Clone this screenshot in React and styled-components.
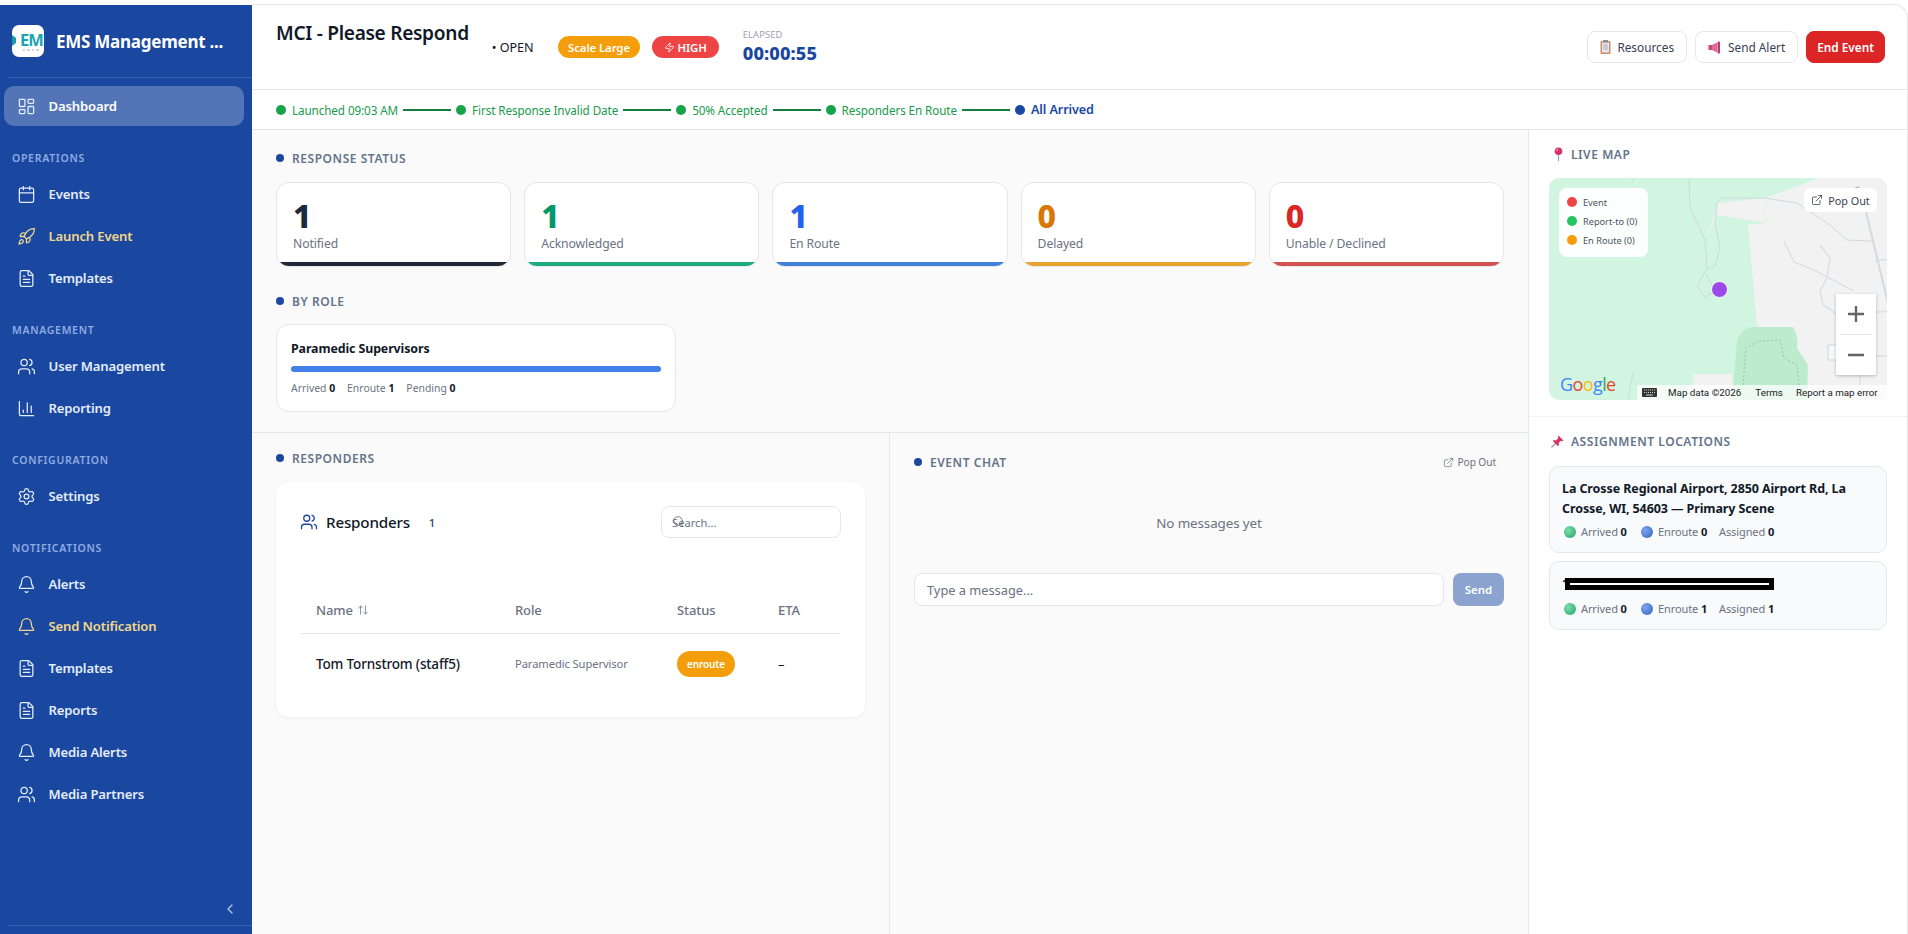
import { Fragment } from 'react';
import styled, { createGlobalStyle } from 'styled-components';
import {
  ArrowUpDown,
  Bell,
  ChartColumn,
  Calendar,
  ChevronLeft,
  ExternalLink,
  FileText,
  LayoutDashboard,
  Rocket,
  Search,
  Settings,
  Users,
  Zap,
} from 'lucide-react';

const GlobalStyle = createGlobalStyle`
  * { box-sizing: border-box; }
  html, body { margin: 0; padding: 0; background: #fff; }
  body {
    font-family: "Noto Sans", "Open Sans", "Liberation Sans", sans-serif;
    color: #111827;
    overflow: hidden;
  }
  input, button { font-family: inherit; }
`;

const Shell = styled.div`
  display: flex;
  height: 934px;
  padding-top: 4px;
  background: #fff;
  overflow: hidden;
`;

const Sidebar = styled.aside`
  width: 252px;
  flex: none;
  display: flex;
  flex-direction: column;
  margin-top: 1px;
  padding-bottom: 8px;
  background: #1a479f;
`;

const Brand = styled.div`
  height: 73px;
  margin-left: 8px;
  padding-left: 4px;
  display: flex;
  align-items: center;
  gap: 12px;
  border-bottom: 1px solid rgba(255, 255, 255, 0.14);
`;

const LogoBox = styled.div`
  position: relative;
  width: 32px;
  height: 32px;
  flex: none;
  border-radius: 7px;
  background: #fff;
  overflow: hidden;
`;

const LogoText = styled.span`
  position: absolute;
  left: 8px;
  top: 4px;
  font-size: 16.5px;
  line-height: 22px;
  font-weight: 700;
  letter-spacing: -0.9px;
  color: #1aa5b5;
  white-space: nowrap;
`;

const LogoMark = styled.svg`
  position: absolute;
  left: 0;
  top: 0;
`;

const BrandName = styled.div`
  font-size: 17px;
  font-weight: 700;
  letter-spacing: -0.25px;
  color: #fff;
  white-space: nowrap;
`;

const Nav = styled.nav`
  padding: 8px 8px 0 4px;
`;

const NavGroupLabel = styled.div`
  height: 14px;
  margin: 25px 0 9px 8px;
  font-size: 10.5px;
  line-height: 14px;
  font-weight: 600;
  letter-spacing: 0.7px;
  color: #8fabe3;
`;

const NavItem = styled.div`
  height: 40px;
  margin-bottom: 2px;
  padding-left: 13px;
  display: flex;
  align-items: center;
  gap: 12.5px;
  border-radius: 10px;
  font-size: 13.1px;
  font-weight: 600;
  letter-spacing: -0.15px;
  white-space: nowrap;
  color: ${(p) => (p.$accent ? '#f0d78c' : p.$active ? '#ffffff' : '#e3ecfb')};
  background: ${(p) => (p.$active ? 'rgba(255, 255, 255, 0.25)' : 'transparent')};
  svg {
    flex: none;
    color: ${(p) => (p.$accent ? '#f0d78c' : '#e3ecfb')};
  }
`;

const SidebarFoot = styled.div`
  margin-top: auto;
  margin-left: 8px;
  padding: 0 14px 8px 0;
  display: flex;
  justify-content: flex-end;
  color: #b9c9ea;
  border-bottom: 1px solid rgba(255, 255, 255, 0.14);
`;

const Main = styled.main`
  flex: 1;
  min-width: 0;
  display: flex;
  flex-direction: column;
  background: #fff;
  border-top: 1px solid #e5e7eb;
  border-right: 1px solid #e5e7eb;
  border-top-right-radius: 14px;
`;

const Header = styled.header`
  height: 85px;
  flex: none;
  padding: 0 22px 0 24px;
  display: flex;
  align-items: center;
  border-bottom: 1px solid #e5e7eb;
`;

const Title = styled.h1`
  margin: 0 23px 28px 0;
  font-size: 19.1px;
  line-height: 27px;
  font-weight: 600;
  letter-spacing: -0.3px;
  color: #111827;
  white-space: nowrap;
`;

const OpenTag = styled.span`
  margin-right: 24px;
  font-size: 12.6px;
  font-weight: 400;
  letter-spacing: -0.05px;
  color: #111827;
  white-space: nowrap;
`;

const Pill = styled.span`
  height: 22px;
  margin-right: 12px;
  padding: 0 ${(p) => p.$pad}px;
  display: inline-flex;
  align-items: center;
  gap: 2px;
  border-radius: 11px;
  font-size: 11.4px;
  font-weight: 600;
  letter-spacing: -0.1px;
  color: #fff;
  white-space: nowrap;
  background: ${(p) => p.$bg};
`;

const Elapsed = styled.div`
  margin-left: 12px;
  display: flex;
  flex-direction: column;
`;

const ElapsedLabel = styled.span`
  font-size: 9.4px;
  line-height: 12px;
  color: #9ca3af;
  letter-spacing: 0.1px;
`;

const ElapsedValue = styled.span`
  font-size: 18.2px;
  line-height: 24px;
  font-weight: 800;
  letter-spacing: 0.1px;
  color: #1a479f;
`;

const HeaderActions = styled.div`
  margin-left: auto;
  display: flex;
  gap: 8px;
`;

const ActionButton = styled.button`
  height: 32px;
  padding: 0 ${(p) => (p.$danger ? '10px' : '12px')};
  display: inline-flex;
  align-items: center;
  justify-content: center;
  gap: 6px;
  border-radius: 8px;
  border: 1px solid ${(p) => (p.$danger ? '#dc2626' : '#e5e7eb')};
  background: ${(p) => (p.$danger ? '#dc2626' : '#fff')};
  color: ${(p) => (p.$danger ? '#fff' : '#374151')};
  font-size: 11.8px;
  font-weight: ${(p) => (p.$danger ? 600 : 400)};
  white-space: nowrap;
`;

const Timeline = styled.div`
  height: 40px;
  flex: none;
  padding-left: 24px;
  display: flex;
  align-items: center;
  gap: 5px;
  border-bottom: 1px solid #e5e7eb;
`;

const StepDot = styled.span`
  width: 10px;
  height: 10px;
  flex: none;
  border-radius: 50%;
  margin-right: 1px;
  background: ${(p) => (p.$current ? '#1a479f' : '#16a34a')};
`;

const StepText = styled.span`
  font-size: ${(p) => (p.$current ? '12.6px' : '11.7px')};
  font-weight: ${(p) => (p.$current ? 600 : 400)};
  letter-spacing: -0.1px;
  white-space: nowrap;
  color: ${(p) => (p.$current ? '#1a479f' : '#1a9a4c')};
`;

const StepLine = styled.span`
  width: 48px;
  height: 2px;
  flex: none;
  background: #15803d;
`;

const Body = styled.div`
  flex: 1;
  min-height: 0;
  display: flex;
`;

const LeftColumn = styled.div`
  width: 1277px;
  flex: none;
  display: flex;
  flex-direction: column;
  background: #fafafa;
  border-right: 1px solid #e5e7eb;
`;

const StatusArea = styled.section`
  padding: 20px 24px 20px;
  border-bottom: 1px solid #e2e8f0;
`;

const SectionLabel = styled.div`
  height: 16px;
  display: flex;
  align-items: center;
  gap: 8px;
  font-size: 12px;
  font-weight: 600;
  letter-spacing: 0.55px;
  color: #64748b;
  white-space: nowrap;
  &::before {
    content: '';
    width: 8px;
    height: 8px;
    border-radius: 50%;
    background: #1a479f;
  }
`;

const EmojiLabel = styled(SectionLabel)`
  gap: 7px;
  padding-left: ${(p) => (p.$tight ? '2px' : '4px')};
  &::before {
    display: none;
  }
`;

const CardRow = styled.div`
  margin: 16px 0 26px;
  display: grid;
  grid-template-columns: repeat(5, 1fr);
  gap: 13px;
`;

const StatCard = styled.div`
  height: 85px;
  display: flex;
  flex-direction: column;
  border: 1px solid #e5e7eb;
  border-radius: 13px;
  background: #fff;
  overflow: hidden;
`;

const StatBody = styled.div`
  flex: 1;
  padding: 14px 16px 0;
`;

const StatValue = styled.div`
  font-size: 32px;
  line-height: 38px;
  font-weight: 800;
  color: ${(p) => p.$color};
`;

const StatName = styled.div`
  font-size: 12.2px;
  line-height: 18px;
  letter-spacing: -0.1px;
  color: #6b7280;
`;

const StatBar = styled.div`
  height: 4px;
  flex: none;
  background: ${(p) => p.$color};
`;

const RoleCard = styled.div`
  width: 400px;
  height: 88px;
  margin-top: 15px;
  padding: 15px 14px 0;
  border: 1px solid #e5e7eb;
  border-radius: 13px;
  background: #fff;
`;

const RoleName = styled.div`
  font-size: 12.4px;
  line-height: 18px;
  font-weight: 700;
  letter-spacing: -0.1px;
  color: #111827;
`;

const RoleBar = styled.div`
  height: 6px;
  margin-top: 8px;
  border-radius: 3px;
  background: #4080e8;
`;

const RoleStats = styled.div`
  margin-top: 9px;
  display: flex;
  gap: 12px;
  font-size: 10.4px;
  line-height: 14px;
  color: #6b7280;
  b {
    color: #111827;
    font-weight: 700;
  }
`;

const SplitArea = styled.div`
  flex: 1;
  min-height: 0;
  display: grid;
  grid-template-columns: 638px 1fr;
`;

const RespondersPane = styled.section`
  padding: 17px 24px 0;
  border-right: 1px solid #e5e7eb;
`;

const RespondersCard = styled.div`
  height: 235px;
  margin-top: 16px;
  padding: 24px;
  border-radius: 13px;
  background: #fff;
  box-shadow: 0 1px 4px rgba(15, 23, 42, 0.05);
`;

const CardHead = styled.div`
  height: 32px;
  display: flex;
  align-items: center;
`;

const CardTitle = styled.div`
  margin-left: 8px;
  font-size: 15.2px;
  font-weight: 500;
  letter-spacing: -0.2px;
  color: #111827;
`;

const CardCount = styled.span`
  margin-left: 19px;
  font-size: 11.4px;
  font-weight: 500;
  color: #1e3a5f;
`;

const SearchWrap = styled.div`
  position: relative;
  margin-left: auto;
  width: 180px;
  svg {
    position: absolute;
    left: 11px;
    top: 9px;
    color: #6b7280;
  }
`;

const SearchInput = styled.input`
  width: 100%;
  height: 32px;
  padding: 0 10px;
  border: 1px solid #e5e7eb;
  border-radius: 8px;
  background: #fff;
  font-size: 11.2px;
  outline: none;
  &::placeholder {
    color: #6b7280;
    opacity: 1;
  }
`;

const TableRow = styled.div`
  display: grid;
  grid-template-columns: 215px 162px 101px 1fr;
  align-items: center;
  height: ${(p) => (p.$head ? '48px' : '58px')};
  margin-top: ${(p) => (p.$head ? '48px' : '0')};
  padding-top: ${(p) => (p.$head ? '0' : '1px')};
  border-bottom: ${(p) => (p.$head ? '1px solid #e5e7eb' : 'none')};
`;

const HeadCell = styled.div`
  display: flex;
  align-items: center;
  gap: 4px;
  font-size: 13px;
  font-weight: 500;
  letter-spacing: -0.1px;
  color: #6b7280;
  padding-left: ${(p) => (p.$first ? '16px' : '0')};
`;

const NameCell = styled.div`
  padding-left: 16px;
  font-size: 13.5px;
  font-weight: 500;
  letter-spacing: -0.15px;
  color: #111827;
  white-space: nowrap;
`;

const RoleCell = styled.div`
  font-size: 11.2px;
  letter-spacing: -0.1px;
  color: #6b7280;
  white-space: nowrap;
`;

const StatusPill = styled.span`
  width: 58px;
  height: 26px;
  display: inline-flex;
  align-items: center;
  justify-content: center;
  border-radius: 13px;
  background: #f59e0b;
  color: #fff;
  font-size: 10px;
  font-weight: 600;
  letter-spacing: -0.1px;
`;

const EtaCell = styled.div`
  font-size: 13px;
  color: #111827;
`;

const ChatPane = styled.section`
  padding: 21px 24px 0;
`;

const ChatHead = styled.div`
  height: 16px;
  display: flex;
  align-items: center;
  justify-content: space-between;
`;

const PopLink = styled.span`
  padding-right: 8px;
  display: inline-flex;
  align-items: center;
  gap: 4px;
  font-size: 10.2px;
  letter-spacing: -0.1px;
  color: #6b7280;
`;

const NoMessages = styled.div`
  height: 103px;
  padding-top: 2px;
  display: flex;
  align-items: center;
  justify-content: center;
  font-size: 13.4px;
  letter-spacing: -0.1px;
  color: #6b7280;
`;

const ChatForm = styled.div`
  display: flex;
  gap: 9px;
`;

const ChatInput = styled.input`
  flex: 1;
  min-width: 0;
  height: 33px;
  padding: 0 12px;
  border: 1px solid #e5e7eb;
  border-radius: 8px;
  background: #fff;
  font-size: 12.8px;
  outline: none;
  &::placeholder {
    color: #6b7280;
    opacity: 1;
  }
`;

const SendButton = styled.button`
  width: 51px;
  height: 33px;
  border: 0;
  border-radius: 8px;
  background: #8ca3cf;
  color: #fff;
  font-size: 11.4px;
  font-weight: 600;
`;

const RightPanel = styled.div`
  flex: 1;
  min-width: 0;
  background: #fff;
`;

const MapSection = styled.section`
  padding: 16px 20px 16px;
  border-bottom: 1px solid #f1f3f5;
`;

const MapBox = styled.div`
  position: relative;
  height: 222px;
  margin-top: 16px;
  border-radius: 10px;
  overflow: hidden;
  background: #d2f5e1;
`;

const MapArt = styled.svg`
  display: block;
`;

const Legend = styled.div`
  position: absolute;
  left: 10px;
  top: 10px;
  width: 89px;
  height: 69px;
  padding: 9px 8px;
  display: flex;
  flex-direction: column;
  gap: 9px;
  border-radius: 8px;
  background: rgba(255, 255, 255, 0.93);
`;

const LegendRow = styled.div`
  height: 10px;
  display: flex;
  align-items: center;
  gap: 6px;
  font-size: 9.2px;
  color: #4b5563;
  white-space: nowrap;
  &::before {
    content: '';
    width: 10px;
    height: 10px;
    border-radius: 50%;
    flex: none;
    background: ${(p) => p.$color};
  }
`;

const MapPop = styled.div`
  position: absolute;
  right: 10px;
  top: 10px;
  width: 73px;
  height: 24px;
  display: flex;
  align-items: center;
  justify-content: center;
  gap: 5px;
  border-radius: 6px;
  background: #fff;
  font-size: 10.8px;
  color: #374151;
  white-space: nowrap;
`;

const MapMarker = styled.div`
  position: absolute;
  left: 162px;
  top: 103px;
  width: 17px;
  height: 17px;
  border-radius: 50%;
  border: 1.5px solid #fff;
  background: #9b4be8;
`;

const ZoomControl = styled.div`
  position: absolute;
  right: 11px;
  top: 116px;
  width: 40px;
  height: 81px;
  display: flex;
  flex-direction: column;
  align-items: center;
  background: #fff;
  box-shadow: 0 1px 3px rgba(0, 0, 0, 0.25);
`;

const ZoomStep = styled.div`
  flex: 1;
  width: 30px;
  display: flex;
  align-items: center;
  justify-content: center;
  color: #666;
  border-top: ${(p) => (p.$split ? '1px solid #e6e6e6' : 'none')};
`;

const GoogleMark = styled.div`
  position: absolute;
  left: 11px;
  bottom: 5px;
  font-family: 'Open Sans', sans-serif;
  font-size: 18px;
  line-height: 22px;
  font-weight: 400;
  letter-spacing: -0.6px;
`;

const GoogleLetter = styled.span`
  color: ${(p) => p.$color};
`;

const Attribution = styled.div`
  position: absolute;
  right: 0;
  bottom: 0;
  width: 250px;
  height: 15px;
  padding: 0 6px 0 5px;
  display: flex;
  align-items: center;
  font-family: Roboto, sans-serif;
  font-size: 9.8px;
  color: #222;
  white-space: nowrap;
  background: rgba(255, 255, 255, 0.72);
`;

const AttrPiece = styled.span`
  margin-left: ${(p) => p.$gap}px;
`;

const LocationSection = styled.section`
  padding: 16px 20px 0;
`;

const LocationList = styled.div`
  margin-top: 17px;
  display: flex;
  flex-direction: column;
  gap: 8px;
`;

const LocationCard = styled.div`
  padding: 12px;
  border: 1px solid #e5e7eb;
  border-radius: 10px;
  background: #f8fafc;
`;

const LocationName = styled.div`
  font-size: 12.5px;
  line-height: 19.5px;
  font-weight: 700;
  letter-spacing: -0.1px;
  color: #111827;
`;

const Redacted = styled.div`
  position: relative;
  height: 21px;
  font-size: 12.5px;
  line-height: 20px;
  font-weight: 700;
  color: #111827;
`;

const RedactBar = styled.div`
  position: absolute;
  left: 3px;
  top: 4px;
  width: 209px;
  height: 12px;
  padding: 5px 5px 0;
  background: #000;
  &::after {
    content: '';
    display: block;
    height: 2px;
    background: #fff;
  }
`;

const LocationStats = styled.div`
  margin-top: 6px;
  padding-left: 2px;
  display: flex;
  align-items: center;
  font-size: 11px;
  line-height: 16px;
  letter-spacing: -0.1px;
  color: #6b7280;
  b {
    color: #111827;
    font-weight: 700;
  }
`;

const StatOrb = styled.span`
  width: 12px;
  height: 12px;
  margin-right: 5px;
  flex: none;
  border-radius: 50%;
  background: radial-gradient(circle at 35% 35%, ${(p) => p.$light}, ${(p) => p.$dark});
`;

const StatSpan = styled.span`
  width: ${(p) => p.$width}px;
  flex: none;
  white-space: nowrap;
`;

const navGroups = [
  {
    label: 'OPERATIONS',
    items: [
      { icon: Calendar, text: 'Events' },
      { icon: Rocket, text: 'Launch Event', accent: true },
      { icon: FileText, text: 'Templates' },
    ],
  },
  {
    label: 'MANAGEMENT',
    items: [
      { icon: Users, text: 'User Management' },
      { icon: ChartColumn, text: 'Reporting' },
    ],
  },
  {
    label: 'CONFIGURATION',
    items: [{ icon: Settings, text: 'Settings' }],
  },
  {
    label: 'NOTIFICATIONS',
    items: [
      { icon: Bell, text: 'Alerts' },
      { icon: Bell, text: 'Send Notification', accent: true },
      { icon: FileText, text: 'Templates' },
      { icon: FileText, text: 'Reports' },
      { icon: Bell, text: 'Media Alerts' },
      { icon: Users, text: 'Media Partners' },
    ],
  },
];

const steps = ['Launched 09:03 AM', 'First Response Invalid Date', '50% Accepted', 'Responders En Route'];

const stats = [
  { value: 1, name: 'Notified', color: '#1e293b', bar: '#1f2937' },
  { value: 1, name: 'Acknowledged', color: '#059669', bar: '#1faa80' },
  { value: 1, name: 'En Route', color: '#2563eb', bar: '#427fdb' },
  { value: 0, name: 'Delayed', color: '#d97706', bar: '#e6a330' },
  { value: 0, name: 'Unable / Declined', color: '#dc2626', bar: '#d4504f' },
];

const ClipboardGlyph = () => (
  <svg width="11" height="14" viewBox="0 0 11 14">
    <rect x="0.5" y="1" width="10" height="13" rx="1" fill="#c98f6a" />
    <rect x="2" y="2.5" width="7" height="10" fill="#e8e6ee" />
    <rect x="3" y="0" width="5" height="2.5" fill="#8f8f9a" />
    <path d="M3 5h5M3 7h5M3 9h5" stroke="#9aa0b5" strokeWidth="0.8" />
  </svg>
);

const MegaphoneGlyph = () => (
  <svg width="14" height="13" viewBox="0 0 14 13">
    <rect x="0.5" y="4" width="3.5" height="5" fill="#c9477f" />
    <path d="M4 4 9 1.5v10L4 9z" fill="#e06a9c" />
    <rect x="9.5" y="0.5" width="2.5" height="12" rx="1" fill="#b83a72" />
  </svg>
);

const PinGlyph = () => (
  <svg width="11" height="14" viewBox="0 0 11 14">
    <path d="M5.5 7 5.5 14" stroke="#9aa0a8" strokeWidth="1.2" />
    <circle cx="5.5" cy="4.2" r="3.8" fill="#d6336c" />
    <circle cx="4.2" cy="3" r="1" fill="#f49ab8" />
  </svg>
);

const PushpinGlyph = () => (
  <svg width="13" height="13" viewBox="0 0 13 13">
    <path d="M0.5 12.5 5 8" stroke="#9aa0a8" strokeWidth="1.2" />
    <path d="M7.5 0.5 12.5 5.5 11 6.2 9.8 5.8 7.6 8 8 10.5 6.8 11 2 6.2 2.5 5 5 5.4 7.2 3.2 6.8 2z" fill="#d6335f" />
  </svg>
);

const MapDrawing = () => (
  <MapArt width="339" height="222" viewBox="0 0 339 222">
    <path d="M271 0H339V222H208V148L199 47 218 45 216 20Z" fill="#f2f2f2" />
    <path d="M169 25 216 20 217 45 168 37 156 62 166 36Z" fill="#f2f2f2" />
    <path d="M144 196H183V222H144Z" fill="#f2f2f2" />
    <path d="M183 222 188 163Q192 150 204 149L244 149Q250 160 248 170L259 187 258 222Z" fill="#bceccd" />
    <path
      d="M194 207 197 170Q205 165 212 163L231 162 235 180 248 187 250 207"
      fill="none"
      stroke="#86b89c"
      strokeWidth="0.7"
      strokeDasharray="2 2"
    />
    <g fill="none" stroke="#d0d7dd" strokeWidth="1">
      <path d="M140 0 141 30 156 62 158 90 148 108 156 119 166 113 157 96" />
      <path d="M168 25 173 20H215L248 25 281 47 298 62 322 63" />
      <path d="M168 25 166 44 171 70 166 88 158 91" />
      <path d="M235 63 245 84 265 92 305 113" />
      <path d="M271 67 281 80 278 100 271 113 274 127 291 138 339 133" strokeWidth="1.6" stroke="#dce1e6" />
      <path d="M279 167H290V182H279Z" fill="#f8f8f8" />
      <path d="M290 178H339" />
      <path d="M311 195V222" />
      <path d="M326 83 339 81" strokeWidth="2" stroke="#dde1e5" />
    </g>
    <path d="M317 34 339 125" fill="none" stroke="#d5dbe1" strokeWidth="2.2" />
    <path d="M85 0 83 5M84 195 79 222" fill="none" stroke="#c6ced6" strokeWidth="0.6" />
    <text x="306" y="8" fontSize="6" fill="#7b8794" transform="rotate(80 306 8)">
      16
    </text>
  </MapArt>
);

const App = () => (
  <>
    <GlobalStyle />
    <Shell>
      <Sidebar>
        <Brand>
          <LogoBox>
            <LogoText>EM</LogoText>
            <LogoMark width="32" height="32" viewBox="0 0 32 32">
              <path d="M0 10 4 13 4 18 0 21Z" fill="#159aa8" />
              <path d="M11 25h2M15 25h3M20 25h2M24 25h3" stroke="#8a9aa6" strokeWidth="0.8" />
            </LogoMark>
          </LogoBox>
          <BrandName>EMS Management ...</BrandName>
        </Brand>
        <Nav>
          <NavItem $active>
            <LayoutDashboard size={19} strokeWidth={1.6} />
            Dashboard
          </NavItem>
          {navGroups.map((group) => (
            <div key={group.label}>
              <NavGroupLabel>{group.label}</NavGroupLabel>
              {group.items.map(({ icon: Icon, text, accent }) => (
                <NavItem key={text} $accent={accent}>
                  <Icon size={19} strokeWidth={1.6} />
                  {text}
                </NavItem>
              ))}
            </div>
          ))}
        </Nav>
        <SidebarFoot>
          <ChevronLeft size={16} strokeWidth={1.8} />
        </SidebarFoot>
      </Sidebar>

      <Main>
        <Header>
          <Title>MCI - Please Respond</Title>
          <OpenTag>• OPEN</OpenTag>
          <Pill $bg="#f59e0b" $pad={10.5}>
            Scale Large
          </Pill>
          <Pill $bg="#ef4444" $pad={12}>
            <Zap size={11} strokeWidth={1.8} />
            HIGH
          </Pill>
          <Elapsed>
            <ElapsedLabel>ELAPSED</ElapsedLabel>
            <ElapsedValue>00:00:55</ElapsedValue>
          </Elapsed>
          <HeaderActions>
            <ActionButton>
              <ClipboardGlyph />
              Resources
            </ActionButton>
            <ActionButton>
              <MegaphoneGlyph />
              Send Alert
            </ActionButton>
            <ActionButton $danger>End Event</ActionButton>
          </HeaderActions>
        </Header>

        <Timeline>
          {steps.map((step) => (
            <Fragment key={step}>
              <StepDot />
              <StepText>{step}</StepText>
              <StepLine />
            </Fragment>
          ))}
          <StepDot $current />
          <StepText $current>All Arrived</StepText>
        </Timeline>

        <Body>
          <LeftColumn>
            <StatusArea>
              <SectionLabel>RESPONSE STATUS</SectionLabel>
              <CardRow>
                {stats.map((s) => (
                  <StatCard key={s.name}>
                    <StatBody>
                      <StatValue $color={s.color}>{s.value}</StatValue>
                      <StatName>{s.name}</StatName>
                    </StatBody>
                    <StatBar $color={s.bar} />
                  </StatCard>
                ))}
              </CardRow>
              <SectionLabel>BY ROLE</SectionLabel>
              <RoleCard>
                <RoleName>Paramedic Supervisors</RoleName>
                <RoleBar />
                <RoleStats>
                  <span>
                    Arrived <b>0</b>
                  </span>
                  <span>
                    Enroute <b>1</b>
                  </span>
                  <span>
                    Pending <b>0</b>
                  </span>
                </RoleStats>
              </RoleCard>
            </StatusArea>

            <SplitArea>
              <RespondersPane>
                <SectionLabel>RESPONDERS</SectionLabel>
                <RespondersCard>
                  <CardHead>
                    <Users size={18} strokeWidth={1.7} color="#1a479f" />
                    <CardTitle>Responders</CardTitle>
                    <CardCount>1</CardCount>
                    <SearchWrap>
                      <SearchInput placeholder="Search..." />
                      <Search size={13} strokeWidth={1.6} />
                    </SearchWrap>
                  </CardHead>
                  <TableRow $head>
                    <HeadCell $first>
                      Name <ArrowUpDown size={12} strokeWidth={1.5} />
                    </HeadCell>
                    <HeadCell>Role</HeadCell>
                    <HeadCell>Status</HeadCell>
                    <HeadCell>ETA</HeadCell>
                  </TableRow>
                  <TableRow>
                    <NameCell>Tom Tornstrom (staff5)</NameCell>
                    <RoleCell>Paramedic Supervisor</RoleCell>
                    <div>
                      <StatusPill>enroute</StatusPill>
                    </div>
                    <EtaCell>–</EtaCell>
                  </TableRow>
                </RespondersCard>
              </RespondersPane>

              <ChatPane>
                <ChatHead>
                  <SectionLabel>EVENT CHAT</SectionLabel>
                  <PopLink>
                    <ExternalLink size={11} strokeWidth={1.6} />
                    Pop Out
                  </PopLink>
                </ChatHead>
                <NoMessages>No messages yet</NoMessages>
                <ChatForm>
                  <ChatInput placeholder="Type a message..." />
                  <SendButton>Send</SendButton>
                </ChatForm>
              </ChatPane>
            </SplitArea>
          </LeftColumn>

          <RightPanel>
            <MapSection>
              <EmojiLabel>
                <PinGlyph />
                LIVE MAP
              </EmojiLabel>
              <MapBox>
                <MapDrawing />
                <Legend>
                  <LegendRow $color="#ef4444">Event</LegendRow>
                  <LegendRow $color="#22c55e">Report-to (0)</LegendRow>
                  <LegendRow $color="#f59e0b">En Route (0)</LegendRow>
                </Legend>
                <MapPop>
                  <ExternalLink size={12} strokeWidth={1.6} />
                  Pop Out
                </MapPop>
                <MapMarker />
                <ZoomControl>
                  <ZoomStep>
                    <svg width="18" height="18" viewBox="0 0 18 18">
                      <path d="M9 1v16M1 9h16" stroke="#666" strokeWidth="2.4" />
                    </svg>
                  </ZoomStep>
                  <ZoomStep $split>
                    <svg width="18" height="18" viewBox="0 0 18 18">
                      <path d="M1 9h16" stroke="#666" strokeWidth="2.4" />
                    </svg>
                  </ZoomStep>
                </ZoomControl>
                <GoogleMark>
                  <GoogleLetter $color="#4285f4">G</GoogleLetter>
                  <GoogleLetter $color="#ea4335">o</GoogleLetter>
                  <GoogleLetter $color="#fbbc05">o</GoogleLetter>
                  <GoogleLetter $color="#4285f4">g</GoogleLetter>
                  <GoogleLetter $color="#34a853">l</GoogleLetter>
                  <GoogleLetter $color="#ea4335">e</GoogleLetter>
                </GoogleMark>
                <Attribution>
                  <svg width="15" height="9" viewBox="0 0 15 9">
                    <rect width="15" height="9" rx="1" fill="#333" />
                    <path
                      d="M2 2h1M4 2h1M6 2h1M8 2h1M10 2h1M12 2h1M2 4.5h1M4 4.5h1M6 4.5h1M8 4.5h1M10 4.5h1M12 4.5h1M4 7h7"
                      stroke="#fff"
                      strokeWidth="0.8"
                    />
                  </svg>
                  <AttrPiece $gap={11}>Map data ©2026</AttrPiece>
                  <AttrPiece $gap={14}>Terms</AttrPiece>
                  <AttrPiece $gap={13}>Report a map error</AttrPiece>
                </Attribution>
              </MapBox>
            </MapSection>

            <LocationSection>
              <EmojiLabel $tight>
                <PushpinGlyph />
                ASSIGNMENT LOCATIONS
              </EmojiLabel>
              <LocationList>
                <LocationCard>
                  <LocationName>
                    La Crosse Regional Airport, 2850 Airport Rd, La Crosse, WI, 54603 — Primary Scene
                  </LocationName>
                  <LocationStats>
                    <StatOrb $light="#7be0a8" $dark="#22a06b" />
                    <StatSpan $width={60}>
                      Arrived <b>0</b>
                    </StatSpan>
                    <StatOrb $light="#7ea6ec" $dark="#2f62c4" />
                    <StatSpan $width={61}>
                      Enroute <b>0</b>
                    </StatSpan>
                    <StatSpan $width={70}>
                      Assigned <b>0</b>
                    </StatSpan>
                  </LocationStats>
                </LocationCard>
                <LocationCard>
                  <Redacted>
                    1
                    <RedactBar />
                  </Redacted>
                  <LocationStats>
                    <StatOrb $light="#7be0a8" $dark="#22a06b" />
                    <StatSpan $width={60}>
                      Arrived <b>0</b>
                    </StatSpan>
                    <StatOrb $light="#7ea6ec" $dark="#2f62c4" />
                    <StatSpan $width={61}>
                      Enroute <b>1</b>
                    </StatSpan>
                    <StatSpan $width={70}>
                      Assigned <b>1</b>
                    </StatSpan>
                  </LocationStats>
                </LocationCard>
              </LocationList>
            </LocationSection>
          </RightPanel>
        </Body>
      </Main>
    </Shell>
  </>
);

export default App;
